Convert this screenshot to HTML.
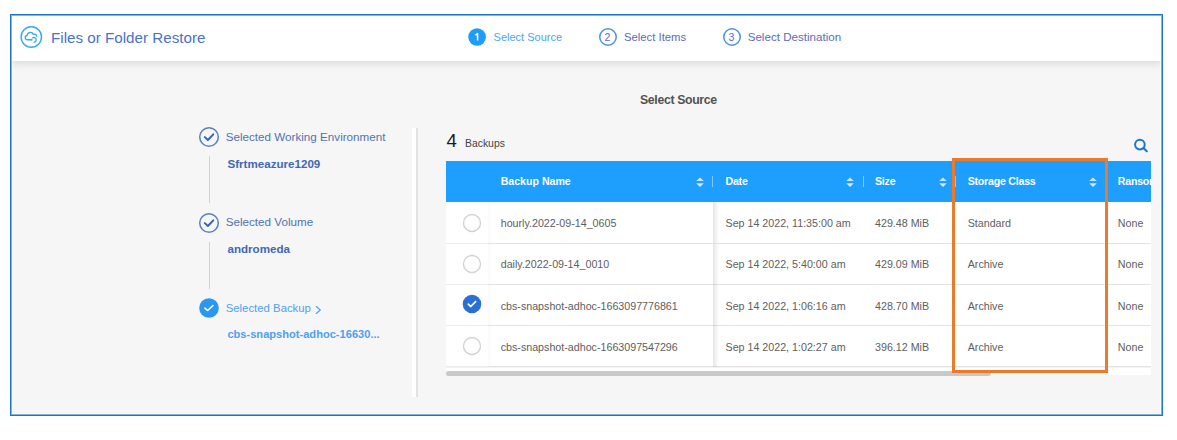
<!DOCTYPE html>
<html><head><meta charset="utf-8">
<style>
*{margin:0;padding:0;box-sizing:border-box}
html,body{width:1177px;height:440px;background:#fff;overflow:hidden;font-family:"Liberation Sans",sans-serif}
.abs{position:absolute;white-space:nowrap}
#frame{position:absolute;left:10px;top:14px;width:1153px;height:402px;background:#f6f6f6;overflow:hidden}
#fb{position:absolute;left:10px;top:14px;width:1153px;height:402px;border:1px solid #1a76c6;box-shadow:inset 0 0 0 1px rgba(26,118,198,0.55),inset 0 0 0 2px rgba(255,255,255,0.6);z-index:10}
#hdr{position:absolute;left:0;top:0;width:1153px;height:46.6px;background:#fff;box-shadow:0 2px 9px rgba(0,0,0,0.13)}
.t{position:absolute;white-space:nowrap;line-height:1}
.hd{font-size:10.6px;font-weight:bold;color:#fff}
.cell{font-size:10.7px;color:#5e5e5e}
</style></head><body>
<div id="frame">
  <div id="hdr"></div>
</div>

<!-- header icon -->
<svg class="abs" style="left:19px;top:25px" width="25" height="25" viewBox="0 0 25 25">
  <circle cx="12.3" cy="12" r="10.2" fill="none" stroke="#3aa8f6" stroke-width="1.45"/>
  <path d="M12.2 14.7 H8.5 A2.1 2.1 0 0 1 8.1 10.5 A3.3 3.3 0 0 1 14.4 9.4 A2.2 2.2 0 0 1 17.7 11.2" fill="none" stroke="#3aa8f6" stroke-width="1.35" stroke-linecap="round" stroke-linejoin="round"/>
  <path d="M13.6 12.9 A2.3 2.3 0 1 1 15.1 17.1" fill="none" stroke="#3aa8f6" stroke-width="1.35" stroke-linecap="round"/>
  <circle cx="12.7" cy="14.7" r="0.85" fill="#3aa8f6"/>
</svg>
<div class="t" id="title" style="left:51px;top:30px;font-size:15.2px;color:#4a72c9">Files or Folder Restore</div>

<!-- stepper -->
<svg class="abs" style="left:467px;top:27px" width="20" height="20" viewBox="0 0 20 20">
  <circle cx="10.1" cy="10" r="8.85" fill="#1f9cf8"/>
  <path d="M8.4 8.2 L10.6 6.6 V13.6" fill="none" stroke="#fff" stroke-width="1.5" stroke-linejoin="round"/>
</svg>
<div class="t" id="s1" style="left:493.6px;top:32.3px;font-size:11px;color:#4ea5f3">Select Source</div>
<svg class="abs" style="left:597.6px;top:27px" width="20" height="20" viewBox="0 0 20 20">
  <circle cx="10" cy="10" r="8.25" fill="none" stroke="#4b94dc" stroke-width="1.5"/>
</svg>
<div class="t" style="left:604.6px;top:32.3px;font-size:10.6px;color:#5b6cc0">2</div>
<div class="t" id="s2" style="left:624px;top:32px;font-size:11.3px;color:#5a6db8">Select Items</div>
<svg class="abs" style="left:721.5px;top:27px" width="20" height="20" viewBox="0 0 20 20">
  <circle cx="10" cy="10" r="8.25" fill="none" stroke="#4b94dc" stroke-width="1.5"/>
</svg>
<div class="t" style="left:728.5px;top:32.3px;font-size:10.6px;color:#5b6cc0">3</div>
<div class="t" id="s3" style="left:747.7px;top:31.1px;font-size:11.6px;color:#5a6db8">Select Destination</div>

<!-- heading -->
<div class="t" id="h" style="left:640px;top:93.8px;font-size:12.3px;letter-spacing:-0.35px;font-weight:bold;color:#525252">Select Source</div>

<!-- left panel -->
<svg class="abs" style="left:198px;top:126px" width="22" height="22" viewBox="0 0 22 22">
  <circle cx="11" cy="11" r="9.3" fill="none" stroke="#5a80c2" stroke-width="1.5"/>
  <path d="M6.8 11.1 L9.9 14 L15.3 8.3" fill="none" stroke="#3563b0" stroke-width="1.9" stroke-linecap="round" stroke-linejoin="round"/>
</svg>
<div class="t" id="l1" style="left:225.7px;top:131px;font-size:11.66px;color:#5073b0">Selected Working Environment</div>
<div class="t" id="v1" style="left:227.5px;top:157.5px;font-size:11.6px;font-weight:bold;color:#4069b3">Sfrtmeazure1209</div>
<div class="abs" style="left:209px;top:156px;width:1px;height:47px;background:#d2d2d2"></div>

<svg class="abs" style="left:198px;top:211.7px" width="22" height="22" viewBox="0 0 22 22">
  <circle cx="11" cy="11" r="9.3" fill="none" stroke="#5a80c2" stroke-width="1.5"/>
  <path d="M6.8 11.1 L9.9 14 L15.3 8.3" fill="none" stroke="#3563b0" stroke-width="1.9" stroke-linecap="round" stroke-linejoin="round"/>
</svg>
<div class="t" id="l2" style="left:225.7px;top:216.2px;font-size:11.66px;color:#5073b0">Selected Volume</div>
<div class="t" id="v2" style="left:227.5px;top:242.5px;font-size:11.6px;font-weight:bold;color:#4069b3">andromeda</div>
<div class="abs" style="left:209px;top:242px;width:1px;height:47px;background:#d2d2d2"></div>

<svg class="abs" style="left:198px;top:297.3px" width="22" height="22" viewBox="0 0 22 22">
  <circle cx="11" cy="11" r="9.8" fill="#2a98f0"/>
  <path d="M6.9 11.1 L9.7 13.6 L15 8.4" fill="none" stroke="#fff" stroke-width="1.45" stroke-linecap="round" stroke-linejoin="round"/>
</svg>
<div class="t" id="l3" style="left:225.7px;top:302.5px;font-size:11.36px;color:#4ea3f0">Selected Backup</div>
<svg class="abs" style="left:314px;top:305px" width="9" height="10" viewBox="0 0 9 10"><path d="M2.3 1.6 L6.3 5 L2.3 8.4" fill="none" stroke="#4ea3f0" stroke-width="1.25" stroke-linecap="round" stroke-linejoin="round"/></svg>
<div class="t" id="v3" style="left:227.4px;top:328.5px;font-size:11.1px;font-weight:bold;color:#4f9ff0">cbs-snapshot-adhoc-16630...</div>

<!-- divider -->
<div class="abs" style="left:412px;top:128px;width:3.5px;height:269px;background:#fff"></div>
<div class="abs" style="left:415.5px;top:128px;width:2px;height:269px;background:#e2e2e2"></div>

<!-- count -->
<div class="t" style="left:446.5px;top:131.5px;font-size:18.6px;color:#1a1a1a">4</div>
<div class="t" id="bk" style="left:465px;top:138.5px;font-size:10.4px;color:#444">Backups</div>
<svg class="abs" style="left:1133px;top:138px" width="16" height="16" viewBox="0 0 16 16">
  <circle cx="6.9" cy="6.6" r="4.8" fill="none" stroke="#1d74cc" stroke-width="2"/>
  <path d="M10.4 10.1 L13.8 13.3" stroke="#1d74cc" stroke-width="2.1" stroke-linecap="round"/>
</svg>

<!-- table -->
<!--TBL--><div id="tbl" class="abs" style="left:446px;top:161px;width:705px;height:216px;overflow:hidden"><div class="abs" style="left:0;top:1px;width:705px;height:215px">
<div class="abs" style="left:0;top:-1px;width:705px;height:41px;background:#1e9efd"></div>
<div class="t hd" style="left:54.7px;top:14.33px;">Backup Name</div>
<div class="t hd" style="left:279.5px;top:14.33px;letter-spacing:-0.22px;">Date</div>
<div class="t hd" style="left:429px;top:14.33px;letter-spacing:-0.22px;">Size</div>
<div class="t hd" style="left:521.7px;top:14.33px;letter-spacing:-0.22px;">Storage Class</div>
<div class="t hd" style="left:671.8px;top:14.33px;letter-spacing:-0.22px;">Ransomware</div>
<svg class="abs" style="left:250.0px;top:14.5px" width="8" height="11" viewBox="0 0 8 11"><path d="M4 0.4 L7.8 3.9 H0.2 Z M0.2 6.2 H7.8 L4 9.9 Z" fill="rgba(255,250,245,0.78)"/></svg>
<svg class="abs" style="left:400.0px;top:14.5px" width="8" height="11" viewBox="0 0 8 11"><path d="M4 0.4 L7.8 3.9 H0.2 Z M0.2 6.2 H7.8 L4 9.9 Z" fill="rgba(255,250,245,0.78)"/></svg>
<svg class="abs" style="left:493.0px;top:14.5px" width="8" height="11" viewBox="0 0 8 11"><path d="M4 0.4 L7.8 3.9 H0.2 Z M0.2 6.2 H7.8 L4 9.9 Z" fill="rgba(255,250,245,0.78)"/></svg>
<svg class="abs" style="left:642.7px;top:14.5px" width="8" height="11" viewBox="0 0 8 11"><path d="M4 0.4 L7.8 3.9 H0.2 Z M0.2 6.2 H7.8 L4 9.9 Z" fill="rgba(255,250,245,0.78)"/></svg>
<div class="abs" style="left:266.0px;top:14px;width:1px;height:11px;background:rgba(255,255,255,0.45)"></div>
<div class="abs" style="left:416.5px;top:14px;width:1px;height:11px;background:rgba(255,255,255,0.45)"></div>
<div class="abs" style="left:509.0px;top:14px;width:1px;height:11px;background:rgba(255,255,255,0.45)"></div>
<div class="abs" style="left:0;top:40px;width:705px;height:41px;background:#fff"></div>
<div class="abs" style="left:0;top:81px;width:42px;height:1px;background:#ebebeb"></div>
<div class="abs" style="left:42px;top:81px;width:663px;height:1px;background:#e3e3e3"></div>
<div class="abs" style="left:267px;top:40px;width:6px;height:41px;background:linear-gradient(to right,rgba(0,0,0,0.10),rgba(0,0,0,0))"></div>
<svg class="abs" style="left:16.0px;top:50.8px" width="20" height="20" viewBox="0 0 20 20"><circle cx="10" cy="10" r="8.5" fill="#fff" stroke="#d3d3d3" stroke-width="1.4"/></svg>
<div class="abs" style="left:42px;top:40px;width:4px;height:41px;background:linear-gradient(to right,rgba(0,0,0,0.025),rgba(0,0,0,0))"></div>
<div class="t cell" style="left:54.7px;top:55.94px">hourly.2022-09-14_0605</div>
<div class="t cell" style="left:279.5px;top:55.94px">Sep 14 2022, 11:35:00 am</div>
<div class="t cell" style="left:429px;top:55.94px">429.48 MiB</div>
<div class="t cell" style="left:521.7px;top:55.94px">Standard</div>
<div class="t cell" style="left:671.8px;top:55.94px">None</div>
<div class="abs" style="left:0;top:82px;width:705px;height:40px;background:#fff"></div>
<div class="abs" style="left:0;top:122px;width:42px;height:1px;background:#ebebeb"></div>
<div class="abs" style="left:42px;top:122px;width:663px;height:1px;background:#e3e3e3"></div>
<div class="abs" style="left:267px;top:82px;width:6px;height:41px;background:linear-gradient(to right,rgba(0,0,0,0.10),rgba(0,0,0,0))"></div>
<svg class="abs" style="left:16.0px;top:91.7px" width="20" height="20" viewBox="0 0 20 20"><circle cx="10" cy="10" r="8.5" fill="#fff" stroke="#d3d3d3" stroke-width="1.4"/></svg>
<div class="abs" style="left:42px;top:82px;width:4px;height:40px;background:linear-gradient(to right,rgba(0,0,0,0.025),rgba(0,0,0,0))"></div>
<div class="t cell" style="left:54.7px;top:96.94px">daily.2022-09-14_0010</div>
<div class="t cell" style="left:279.5px;top:96.94px">Sep 14 2022, 5:40:00 am</div>
<div class="t cell" style="left:429px;top:96.94px">429.09 MiB</div>
<div class="t cell" style="left:521.7px;top:96.94px">Archive</div>
<div class="t cell" style="left:671.8px;top:96.94px">None</div>
<div class="abs" style="left:0;top:123px;width:705px;height:40px;background:#fff"></div>
<div class="abs" style="left:0;top:163px;width:42px;height:1px;background:#ebebeb"></div>
<div class="abs" style="left:42px;top:163px;width:663px;height:1px;background:#e3e3e3"></div>
<div class="abs" style="left:267px;top:123px;width:6px;height:41px;background:linear-gradient(to right,rgba(0,0,0,0.10),rgba(0,0,0,0))"></div>
<svg class="abs" style="left:16.4px;top:132.0px" width="20" height="20" viewBox="0 0 20 20"><circle cx="10" cy="10" r="9.3" fill="#2b6fd6"/><path d="M6.3 10.2 L8.8 12.5 L13.6 7.7" fill="none" stroke="#fff" stroke-width="1.7" stroke-linecap="round" stroke-linejoin="round"/></svg>
<div class="abs" style="left:42px;top:123px;width:4px;height:40px;background:linear-gradient(to right,rgba(0,0,0,0.025),rgba(0,0,0,0))"></div>
<div class="t cell" style="left:54.7px;top:138.54px">cbs-snapshot-adhoc-1663097776861</div>
<div class="t cell" style="left:279.5px;top:138.54px">Sep 14 2022, 1:06:16 am</div>
<div class="t cell" style="left:429px;top:138.54px">428.70 MiB</div>
<div class="t cell" style="left:521.7px;top:138.54px">Archive</div>
<div class="t cell" style="left:671.8px;top:138.54px">None</div>
<div class="abs" style="left:0;top:164px;width:705px;height:40px;background:#fff"></div>
<div class="abs" style="left:0;top:204px;width:42px;height:1px;background:#ebebeb"></div>
<div class="abs" style="left:42px;top:204px;width:663px;height:1px;background:#e3e3e3"></div>
<div class="abs" style="left:267px;top:164px;width:6px;height:41px;background:linear-gradient(to right,rgba(0,0,0,0.10),rgba(0,0,0,0))"></div>
<svg class="abs" style="left:16.0px;top:174.0px" width="20" height="20" viewBox="0 0 20 20"><circle cx="10" cy="10" r="8.5" fill="#fff" stroke="#d3d3d3" stroke-width="1.4"/></svg>
<div class="abs" style="left:42px;top:164px;width:4px;height:40px;background:linear-gradient(to right,rgba(0,0,0,0.025),rgba(0,0,0,0))"></div>
<div class="t cell" style="left:54.7px;top:179.94px">cbs-snapshot-adhoc-1663097547296</div>
<div class="t cell" style="left:279.5px;top:179.94px">Sep 14 2022, 1:02:27 am</div>
<div class="t cell" style="left:429px;top:179.94px">396.12 MiB</div>
<div class="t cell" style="left:521.7px;top:179.94px">Archive</div>
<div class="t cell" style="left:671.8px;top:179.94px">None</div>
<div class="abs" style="left:0;top:205px;width:705px;height:8px;background:#fff"></div>
<div class="abs" style="left:0;top:205px;width:705px;height:1px;background:#f3f3f3"></div>
<div class="abs" style="left:0;top:209px;width:545px;height:4.6px;border-radius:2.3px;background:#c6c8ca"></div>
</div></div><!--/TBL-->

<div id="fb"></div>
<!-- orange box -->
<div class="abs" style="left:952px;top:158px;width:155.7px;height:214.8px;border:3px solid #eb7a2a"></div>
</body></html>
